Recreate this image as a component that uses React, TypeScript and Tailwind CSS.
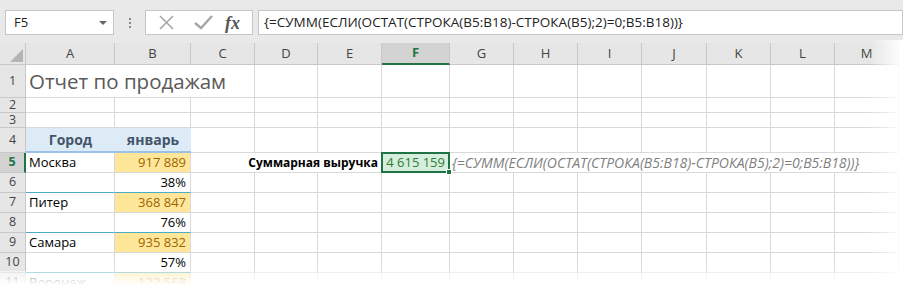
import React from "react";

const cols = ["A", "B", "C", "D", "E", "F", "G", "H", "I", "J", "K", "L", "M"];
const formula = "{=СУММ(ЕСЛИ(ОСТАТ(СТРОКА(B5:B18)-СТРОКА(B5);2)=0;B5:B18))}";

// данные по городам: строка с выручкой и строка с процентом
const rows: { n: number; a?: string; b?: string; kind?: "num" | "pct" }[] = [
  { n: 5, a: "Москва", b: "917 889", kind: "num" },
  { n: 6, b: "38%", kind: "pct" },
  { n: 7, a: "Питер", b: "368 847", kind: "num" },
  { n: 8, b: "76%", kind: "pct" },
  { n: 9, a: "Самара", b: "935 832", kind: "num" },
  { n: 10, b: "57%", kind: "pct" },
  { n: 11, a: "Воронеж", b: "122 568", kind: "num" },
];

const cell = "border-r border-b border-[#d9d9d9]";

const RowHead = ({ n, active }: { n: number; active?: boolean }) => (
  <div
    className={`flex items-center justify-center border-b border-[#c8c8c8] text-[12.5px] leading-none ${
      active
        ? "bg-[#d3d3d3] text-[#217346] font-bold border-r-2 border-r-[#217346]"
        : "bg-[#e6e6e6] text-[#444] border-r border-r-[#c8c8c8]"
    }`}
  >
    {n}
  </div>
);

const Empty = ({ noRight }: { noRight?: boolean }) => (
  <div className={noRight ? "border-b border-[#d9d9d9]" : cell}></div>
);

export default function App() {
  return (
    <div
      className="relative w-[903px] h-[285px] overflow-hidden bg-white"
      style={{ fontFamily: '"Open Sans", "Liberation Sans", sans-serif' }}
    >
      {/* Строка формул */}
      <div className="h-[43px] bg-[#e9e9e9] flex items-start pt-[10px] pl-[5px]">
        <div className="w-[109px] h-[25px] bg-white border border-[#c6c6c6] flex items-center justify-between pl-[8px] pr-[6px] text-[13px] text-[#222]">
          <span>F5</span>
          <span className="w-0 h-0 border-l-[4px] border-r-[4px] border-t-[4px] border-l-transparent border-r-transparent border-t-[#666]"></span>
        </div>
        <div className="w-[31px] h-[25px] flex flex-col items-center justify-center gap-[2px]">
          <span className="w-[2px] h-[2px] bg-[#888]"></span>
          <span className="w-[2px] h-[2px] bg-[#888]"></span>
          <span className="w-[2px] h-[2px] bg-[#888]"></span>
        </div>
        <div className="w-[108px] h-[25px] bg-white border border-[#c6c6c6] flex items-center">
          <svg width="36" height="25" viewBox="0 0 36 25" className="ml-[3px]">
            <path d="M11 6 L24 19 M24 6 L11 19" stroke="#a6a6a6" strokeWidth="1.6" fill="none" />
          </svg>
          <svg width="36" height="25" viewBox="0 0 36 25">
            <path d="M10 13 L16 18 L27 6" stroke="#a6a6a6" strokeWidth="2.4" fill="none" />
          </svg>
          <span
            className="ml-[4px] text-[18px] italic font-bold text-[#555] leading-none"
            style={{ fontFamily: '"Liberation Serif", "DejaVu Serif", serif' }}
          >
            fx
          </span>
        </div>
        <div className="ml-[5px] flex-1 h-[25px] bg-white border border-[#c6c6c6] flex items-center pl-[5px] text-[13.5px] text-[#222] whitespace-nowrap">
          {formula}
        </div>
      </div>

      {/* Сетка листа */}
      <div className="grid grid-cols-[26px_89px_76px_64px_63px_64px_68px_64px_64px_64px_65px_64px_64px_64px] grid-rows-[22px_33px_15px_15px_25px_20px_20px_20px_20px_20px_20px_20px] text-[13px] text-black">
        {/* заголовки столбцов */}
        <div className="bg-[#e6e6e6] border-r border-b border-[#c8c8c8] flex items-end justify-end pr-[2px] pb-[2px]">
          <svg width="13" height="13" viewBox="0 0 13 13">
            <path d="M13 0 L13 13 L0 13 Z" fill="#b4b4b4" />
          </svg>
        </div>
        {cols.map((c) =>
          c === "F" ? (
            <div key={c} className="bg-[#d3d3d3] border-r border-r-[#c8c8c8] border-b-2 border-b-[#217346] flex items-center justify-center text-[#217346] font-bold">
              {c}
            </div>
          ) : (
            <div key={c} className="bg-[#e6e6e6] border-r border-b border-[#c8c8c8] flex items-center justify-center text-[#444]">
              {c}
            </div>
          )
        )}

        {/* строка 1 */}
        <RowHead n={1} />
        <div className="border-b border-[#d9d9d9] flex items-center pl-[3px] overflow-visible whitespace-nowrap text-[20.5px] text-[#595959]">
          Отчет по продажам
        </div>
        <div className="border-b border-[#d9d9d9]"></div>
        {cols.slice(2).map((c) => (
          <Empty key={c} />
        ))}

        {/* строки 2-3 */}
        {[2, 3].map((n) => (
          <React.Fragment key={n}>
            <RowHead n={n} />
            {cols.map((c) => (
              <Empty key={c} />
            ))}
          </React.Fragment>
        ))}

        {/* строка 4 — шапка таблицы */}
        <RowHead n={4} />
        <div className="bg-[#ddebf7] border-b-2 border-[#9bc2e6] flex items-center justify-center font-bold text-[14px] text-[#44546a]">
          Город
        </div>
        <div className="bg-[#ddebf7] border-b-2 border-[#9bc2e6] flex items-center justify-center font-bold text-[14px] text-[#44546a]">
          январь
        </div>
        {cols.slice(2).map((c) => (
          <Empty key={c} />
        ))}

        {/* строки с данными */}
        {rows.map((r) => {
          const teal = r.kind === "pct" ? "border-b border-[#4bacc6]" : "border-b border-[#d9d9d9]";
          return (
            <React.Fragment key={r.n}>
              <RowHead n={r.n} active={r.n === 5} />
              <div className={`${teal} border-r border-r-[#d9d9d9] flex items-center pl-[3px]`}>{r.a}</div>
              <div
                className={`${teal} border-r border-r-[#d9d9d9] flex items-center justify-end pr-[4px] ${
                  r.kind === "num" ? "bg-[#ffe699] text-[#9c6500]" : ""
                }`}
              >
                {r.b}
              </div>
              {r.n === 5 ? (
                <>
                  <Empty noRight />
                  <Empty noRight />
                  <div className="border-r border-b border-[#d9d9d9] flex items-center justify-end pr-[3px] whitespace-nowrap font-bold text-[12px]">
                    Суммарная выручка
                  </div>
                  <div className="relative border-2 border-[#217346] bg-[#d6eedd] flex items-center justify-end pr-[3px] text-[13px] text-[#2f7d32] -mt-[1px] -ml-[1px]">
                    4 615 159
                    <span className="absolute -right-[4px] -bottom-[4px] w-[6px] h-[6px] bg-[#217346] border border-white"></span>
                  </div>
                  <div className="border-b border-[#d9d9d9] flex items-center pl-[2px] whitespace-nowrap italic text-[14px] text-[#7f7f7f] overflow-visible">
                    {formula}
                  </div>
                  {cols.slice(7).map((c, i) => (
                    <Empty key={c} noRight={i < 6} />
                  ))}
                </>
              ) : (
                cols.slice(2).map((c) => <Empty key={c} />)
              )}
            </React.Fragment>
          );
        })}
      </div>

      {/* затухание по краям */}
      <div className="absolute top-[40px] right-0 w-[34px] h-[245px] bg-gradient-to-r from-transparent to-white"></div>
      <div className="absolute left-0 bottom-0 w-full h-[14px] bg-gradient-to-b from-white/50 to-white"></div>
    </div>
  );
}
